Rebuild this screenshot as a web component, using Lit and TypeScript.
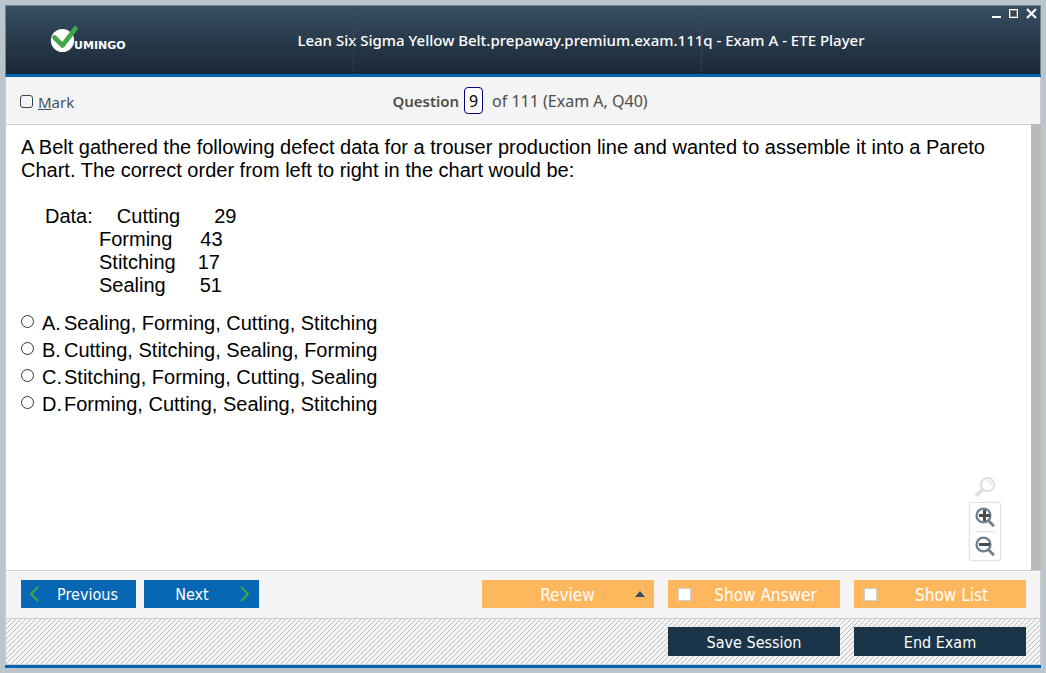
import { LitElement, html, css, svg } from "lit";
import { customElement, state } from "lit/decorators.js";

interface Defect {
  label: string;
  count: number;
  gap: string;
}

const DEFECTS: Defect[] = [
  { label: "Cutting", count: 29, gap: "wide" },
  { label: "Forming", count: 43, gap: "medium" },
  { label: "Stitching", count: 17, gap: "narrow" },
  { label: "Sealing", count: 51, gap: "wide" },
];

const OPTIONS = [
  { key: "A", text: "Sealing, Forming, Cutting, Stitching" },
  { key: "B", text: "Cutting, Stitching, Sealing, Forming" },
  { key: "C", text: "Stitching, Forming, Cutting, Sealing" },
  { key: "D", text: "Forming, Cutting, Sealing, Stitching" },
];

@customElement("exam-header")
export class ExamHeader extends LitElement {
  static styles = css`
    :host {
      display: block;
      border: 1px solid #74888b;
      border-bottom: 3px solid #0563b3;
      background: linear-gradient(#364e62, #1a2836);
      color: #fff;
      font-family: "Noto Sans", "Open Sans", sans-serif;
    }
    .bar {
      position: relative;
      display: grid;
      height: 68px;
      align-items: center;
    }
    .guides {
      position: absolute;
      inset: 0;
      display: grid;
      grid-template-columns: 347fr 348fr 339fr;
      pointer-events: none;
    }
    .guide + .guide {
      border-left: 1px dotted #3a43a0;
    }
    .logo {
      position: absolute;
      left: 44px;
      top: 18px;
      display: flex;
    }
    .brand {
      font: 700 11px "DejaVu Sans", sans-serif;
    }
    .title {
      margin: 0;
      padding: 0 0 0 116px;
      text-align: center;
      font-size: 15px;
      line-height: 20px;
      font-weight: 500;
    }
    .controls {
      position: absolute;
      right: 1px;
      top: 2px;
      display: flex;
      gap: 4px;
    }
    .control {
      display: grid;
      width: 14px;
      height: 12px;
      padding: 0;
      border: 0;
      background: none;
      place-items: center;
    }
  `;

  render() {
    return html`
      <header class="bar">
        <div class="guides"><i class="guide"></i><i class="guide"></i><i class="guide"></i></div>
        <svg class="logo" width="82" height="30" viewBox="0 0 82 30" role="img" aria-label="Vumingo">
          <circle cx="12.5" cy="16.5" r="11.6" fill="#fff" />
          <path d="M4.500 13.500 L12.500 21.500 L25.500 4.500" fill="none" stroke="#43a648" stroke-width="4.600" stroke-linecap="round" stroke-linejoin="round" />
          <text class="brand" x="24" y="25" fill="#fff">UMINGO</text>
        </svg>
        <h1 class="title">Lean Six Sigma Yellow Belt.prepaway.premium.exam.111q - Exam A - ETE Player</h1>
        <div class="controls">
          <button class="control" aria-label="Minimize">
            <svg width="14" height="12"><path d="M3 9 H12" stroke="#fff" stroke-width="2" /></svg>
          </button>
          <button class="control" aria-label="Maximize">
            <svg width="14" height="12"><rect x="2.500" y="1.500" width="8" height="8" fill="none" stroke="#fff" /><rect x="3.500" y="2.500" width="6" height="6" fill="none" stroke="#877f77" /></svg>
          </button>
          <button class="control" aria-label="Close">
            <svg width="14" height="12"><path d="M2 1 L11 10 M11 1 L2 10" stroke="#fff" stroke-width="2.200" /></svg>
          </button>
        </div>
      </header>
    `;
  }
}

@customElement("zoom-tools")
export class ZoomTools extends LitElement {
  static styles = css`
    :host {
      display: grid;
      justify-items: center;
      gap: 4px;
      width: 32px;
    }
    .stack {
      display: grid;
      box-sizing: border-box;
      width: 32px;
      padding: 0 5px;
      border: 1px solid #e2e2e2;
      border-radius: 3px;
      box-shadow: 0 0 2px #e6e6e6;
      background: #fff;
    }
    .tool {
      display: grid;
      place-items: center;
      height: 28px;
      padding: 0;
      border: 0;
      background: none;
    }
    .tool.reset {
      height: 22px;
    }
    .tool + .tool {
      border-top: 1px solid #dcdcdc;
      height: 29px;
    }
  `;

  private glass(mark: string) {
    return html`<svg width="20" height="20" viewBox="0 0 20 20">
      <path d="M12.500 12.800 L18 18.300" stroke="#71818d" stroke-width="3" stroke-linecap="round" />
      <circle cx="8.500" cy="8.500" r="6.900" fill="#fff" stroke="#71818d" stroke-width="2.400" />
      ${svg`<path d=${mark} stroke="#4b4b4b" stroke-width="3" fill="none" />`}
    </svg>`;
  }

  render() {
    return html`
      <button class="tool reset" aria-label="Reset zoom">
        <svg width="20" height="20" viewBox="0 0 20 20">
          <path d="M7.500 12.500 L1.800 18.200" stroke="#dedede" stroke-width="3.200" stroke-linecap="round" />
          <circle cx="12.500" cy="7.700" r="6.600" fill="#fff" stroke="#dedede" stroke-width="2" />
          <path d="M12.500 4.200 A3.500 3.500 0 0 1 16 7.700" fill="none" stroke="#dedede" stroke-width="1.400" />
        </svg>
      </button>
      <div class="stack">
        <button class="tool" aria-label="Zoom in">${this.glass("M4 8.500 H15 M9.500 3 V14")}</button>
        <button class="tool" aria-label="Zoom out">${this.glass("M4 8.500 H15")}</button>
      </div>
    `;
  }
}

@customElement("app-root")
export class AppRoot extends LitElement {
  @state() private answer = "";

  static styles = css`
    :host {
      display: flex;
      flex-direction: column;
      box-sizing: border-box;
      min-height: 100vh;
      padding: 5px;
      background: #bac6cb;
      font-family: "Noto Sans", "Open Sans", sans-serif;
    }
    .window {
      display: flex;
      flex-direction: column;
      flex: 1;
      border-bottom: 3px solid #0563b3;
    }
    .body {
      display: flex;
      flex-direction: column;
      flex: 1;
      border: 1px solid #cccccc;
      border-top: 0;
      background: #f4f4f4;
    }
    .status {
      display: grid;
      grid-template-columns: 1fr auto 1fr;
      align-items: center;
      height: 47px;
      padding: 0 20px 0 14px;
      border-bottom: 1px solid #cccccc;
      color: #4d4d4d;
    }
    .mark {
      display: flex;
      align-items: center;
      gap: 5px;
      font-size: 15px;
      line-height: 20px;
      color: #44525f;
      padding-top: 2px;
    }
    .box {
      appearance: none;
      box-sizing: border-box;
      width: 13px;
      height: 13px;
      margin: 0;
      border: 1px solid #2f4558;
      border-radius: 3px;
    }
    .counter {
      display: flex;
      align-items: center;
      gap: 5px;
      font-size: 16px;
      line-height: 22px;
    }
    .lead {
      font-size: 15px;
      font-weight: 600;
    }
    .number {
      box-sizing: border-box;
      width: 19px;
      height: 27px;
      padding: 0;
      border: 1px solid #000080;
      border-radius: 4px;
      background: #fff;
      color: #000;
      font: 16px "Noto Sans", sans-serif;
      text-align: center;
    }
    .total {
      padding-left: 4px;
    }
    .content {
      position: relative;
      display: flex;
      flex: 1;
      border-bottom: 1px solid #cccccc;
      background: #fff;
      color: #000;
      font-family: "Liberation Sans", Arial, sans-serif;
      font-size: 20px;
      line-height: 23px;
    }
    .question {
      flex: 1;
      padding: 11px 44px 0 15px;
    }
    .prompt {
      margin: 0 0 23px;
    }
    .row {
      display: flex;
      padding-left: 78px;
    }
    .row.first {
      padding-left: 24px;
    }
    .caption {
      padding-right: 24px;
    }
    .narrow {
      padding-right: 22px;
    }
    .medium {
      padding-right: 28px;
    }
    .wide {
      padding-right: 34px;
    }
    .options {
      margin: 13px 0 0;
      padding: 0;
      border: 0;
    }
    .option {
      display: grid;
      grid-template-columns: 21px 22px 1fr;
      line-height: 27px;
    }
    .radio {
      appearance: none;
      box-sizing: border-box;
      width: 13px;
      height: 13px;
      margin: 5px 0 0;
      border: 1px solid #333;
      border-radius: 50%;
      background: #fff;
    }
    .radio:checked {
      background: radial-gradient(#222 40%, #fff 45%);
    }
    .track {
      width: 10px;
      margin: -1px -1px 0 0;
      background: #bbbab6;
    }
    .tools {
      position: absolute;
      right: 39px;
      bottom: 9px;
    }
    .actions,
    .footer {
      display: flex;
      align-items: flex-start;
      box-sizing: border-box;
      padding: 8px 14px 0 15px;
      gap: 14px;
    }
    .actions {
      height: 47px;
      border-top: 1px solid #fff;
    }
    .footer {
      justify-content: flex-end;
      height: 46px;
      border-top: 1px solid #cccccc;
      background: linear-gradient(135deg, transparent 42%, #bdbdbd 42% 58%, transparent 58%) 0 0 / 5px 5px;
    }
    .nav {
      display: flex;
      gap: 8px;
      margin-right: auto;
    }
    .button {
      display: grid;
      align-items: center;
      box-sizing: border-box;
      width: 172px;
      height: 28px;
      padding: 2px 14px 0;
      border: 0;
      color: #fff;
      font: 16px/22px "DejaVu Sans Condensed", "DejaVu Sans", sans-serif;
      text-align: center;
    }
    .button.step {
      width: 115px;
      padding: 0 8px;
      background: #0767b5;
    }
    .step span {
      padding-top: 2px;
    }
    .step.prev {
      grid-template-columns: 10px 1fr;
      padding-right: 0;
    }
    .step.next {
      grid-template-columns: 1fr 10px;
      padding: 0 9px 0 0;
    }
    .button.amber {
      padding: 0;
      background: #ffb75d;
      font-size: 17px;
    }
    .amber span {
      padding-top: 1px;
    }
    .button.amber.review {
      grid-template-columns: 1fr 10px;
      padding: 0 9px 0 18px;
    }
    .button.amber.toggle {
      grid-template-columns: 13px 1fr;
      padding: 0 0 0 10px;
    }
    .button.dark {
      height: 29px;
      background: #1a344a;
    }
    .tick {
      appearance: none;
      box-sizing: border-box;
      width: 13px;
      height: 13px;
      margin: 0;
      border: 1px solid #d0d0d0;
      background: #fff;
    }
    .tick:checked,
    .box:checked {
      background: #2f4558;
    }
  `;

  render() {
    return html`
      <div class="window">
        <exam-header></exam-header>
        <div class="body">
          <div class="status">
            <label class="mark"><input class="box" type="checkbox" /><span><u>M</u>ark</span></label>
            <div class="counter">
              <label class="lead" for="number">Question</label>
              <input class="number" id="number" type="text" value="9" />
              <span class="total">of 111 (Exam A, Q40)</span>
            </div>
          </div>
          <main class="content">
            <div class="question">
              <p class="prompt">A Belt gathered the following defect data for a trouser production line and wanted to assemble it into a Pareto Chart. The correct order from left to right in the chart would be:</p>
              ${DEFECTS.map(
                (d, i) => html`<div class="row ${i === 0 ? "first" : ""}">
                  ${i === 0 ? html`<span class="caption">Data:</span>` : ""}
                  <span class=${d.gap}>${d.label}</span><span>${d.count}</span>
                </div>`
              )}
              <fieldset class="options" aria-label="Answers">
                ${OPTIONS.map(
                  (o) => html`<label class="option">
                    <input class="radio" type="radio" name="answer" .checked=${this.answer === o.key} @change=${() => (this.answer = o.key)} />
                    <span>${o.key}.</span><span>${o.text}</span>
                  </label>`
                )}
              </fieldset>
            </div>
            <zoom-tools class="tools"></zoom-tools>
            <div class="track"></div>
          </main>
          <div class="actions">
            <div class="nav">
              <button class="button step prev">
                <svg width="10" height="16" viewBox="0 0 10 16"><path d="M9 1 L2 8 L9 15" fill="none" stroke="#43a648" stroke-width="2" /></svg>
                <span>Previous</span>
              </button>
              <button class="button step next">
                <span>Next</span>
                <svg width="10" height="16" viewBox="0 0 10 16"><path d="M1 1 L8 8 L1 15" fill="none" stroke="#43a648" stroke-width="2" /></svg>
              </button>
            </div>
            <button class="button amber review">
              <span>Review</span>
              <svg width="10" height="6" viewBox="0 0 10 6"><path d="M0 6 L5 0 L10 6 Z" fill="#344e62" /></svg>
            </button>
            <label class="button amber toggle"><input class="tick" type="checkbox" /><span>Show Answer</span></label>
            <label class="button amber toggle"><input class="tick" type="checkbox" /><span>Show List</span></label>
          </div>
          <div class="footer">
            <button class="button dark">Save Session</button>
            <button class="button dark">End Exam</button>
          </div>
        </div>
      </div>
    `;
  }
}
